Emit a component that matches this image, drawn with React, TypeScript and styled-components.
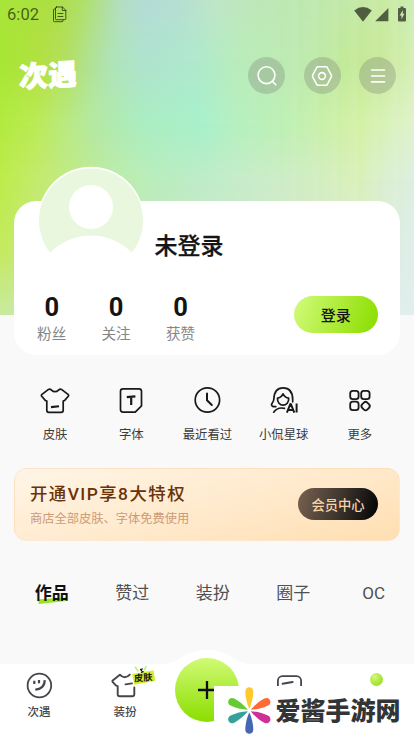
import React from "react";
import styled, { createGlobalStyle, css } from "styled-components";

const GlobalStyle = createGlobalStyle`
  * { box-sizing: border-box; }
  body { margin: 0; background: #f9f9f9; }
  button { border: 0; padding: 0; margin: 0; font: inherit; }
  svg { display: block; flex: none; }
`;

const Screen = styled.div`
  position: relative;
  display: flex;
  flex-direction: column;
  width: 414px;
  height: 736px;
  overflow: hidden;
  background: #f9f9f9;
  color: #141414;
  font-family: Roboto, "Noto Sans CJK SC", sans-serif;
`;

const Backdrop = styled.div`
  position: absolute;
  inset: 0 0 auto 0;
  height: 315px;
  overflow: hidden;
`;

const Wash = styled.div`
  position: absolute;
  inset: 0;
`;

const Band = styled.div<{ $from: number; $to: number; $stops: string }>`
  position: absolute;
  inset: 0;
  background: linear-gradient(90deg, ${(p) => p.$stops});
  ${(p) =>
    p.$to > 0 &&
    css`
      mask-image: linear-gradient(180deg, transparent ${p.$from}px, #000 ${p.$to}px);
    `}
`;

const Streaks = styled.div`
  position: absolute;
  inset: 0 0 0 200px;
  background: repeating-linear-gradient(
    90deg,
    rgba(255, 255, 255, 0) 0,
    rgba(255, 255, 255, 0.07) 16px,
    rgba(255, 255, 255, 0) 20px
  );
  mask-image: linear-gradient(90deg, transparent, #000 60%);
`;

const bands = [
  { from: 0, to: 0, stops: "#a8e63a 0, #addf42 50px, #afe062 80px, #b2df98 103px, #b4dfc0 120px, #b3dcd5 142px, #b6dfd3 180px, #bfe6c8 215px, #bde8b6 260px, #bfe8b0 310px, #c3e9a6 350px, #c8eba2 385px, #cbedb4 414px" },
  { from: 0, to: 60, stops: "#a7e633 0, #b2e042 40px, #b3df5e 65px, #b1e190 88px, #afe3b8 112px, #afe3cf 145px, #afe9cd 195px, #b9ecba 240px, #bdeab0 300px, #c1ea98 345px, #c6e996 375px, #d5efb2 414px" },
  { from: 60, to: 125, stops: "#b2eb40 0, #bbeb55 35px, #b9ea80 65px, #b4e9a4 95px, #acedc0 140px, #a7f0cb 200px, #b4f0c3 228px, #bdf0b5 280px, #cbf0a8 330px, #d4f1a5 360px, #d8f2b8 385px, #dff2cc 414px" },
  { from: 125, to: 180, stops: "#bdec4a 0, #c4ea6c 35px, #c2ea8c 75px, #bdecaa 115px, #b9edbc 155px, #bfecc8 200px, #c8ecc8 250px, #d0edc4 300px, #d9f0b8 358px, #daefd0 385px, #dcefe0 414px" },
  { from: 180, to: 250, stops: "#c4ea5e 0, #c8ea90 60px, #c6e8c0 140px, #d0e8d0 240px, #dcedd2 360px, #deeeea 414px" },
  { from: 250, to: 315, stops: "#c8e9a0 0, #cdeab0 80px, #d8ebdc 240px, #e1eeee 414px" },
];

const StatusBar = styled.header`
  position: relative;
  display: flex;
  align-items: center;
  height: 28px;
  padding: 0 7px;
  color: rgba(0, 0, 0, 0.6);
`;

const Clock = styled.span`
  width: 46px;
  padding-top: 1px;
  font-size: 16.5px;
  line-height: 28px;
  letter-spacing: 0.1px;
`;

const StatusIcons = styled.div`
  display: flex;
  align-items: center;
  margin-left: auto;
`;

const SignalIcon = styled.svg`
  margin-left: 3px;
`;

const BatteryIcon = styled.svg`
  margin: 0 1px 0 9px;
`;

const TopBar = styled.div`
  position: relative;
  display: flex;
  align-items: center;
  height: 95px;
  padding: 0 18px 0 19px;
`;

const Logo = styled.div`
  color: #fff;
  font-size: 29px;
  font-weight: 900;
  line-height: 32px;
  -webkit-text-stroke: 0.8px #fff;
  transform: skewY(-3deg);
`;

const Actions = styled.div`
  display: flex;
  gap: 18.3px;
  margin-left: auto;
`;

const RoundButton = styled.button`
  display: grid;
  place-items: center;
  width: 37px;
  height: 37px;
  border-radius: 50%;
  background: rgba(125, 135, 120, 0.34);
`;

const ProfileCard = styled.section`
  position: relative;
  height: 154px;
  margin: 78px 14px 0;
  border-radius: 22px;
  background: #fff;
`;

const AvatarBox = styled.div`
  position: absolute;
  left: 24px;
  top: -35.5px;
  width: 106px;
  height: 106px;
`;

const UserName = styled.h1`
  margin: 0;
  padding: 29px 0 0 140.5px;
  font-size: 23px;
  font-weight: 500;
  line-height: 34px;
  -webkit-text-stroke: 0.25px currentColor;
`;

const ProfileRow = styled.div`
  display: flex;
  align-items: flex-start;
  padding: 29.5px 22.5px 0 5.5px;
`;

const Stat = styled.div`
  display: flex;
  flex-direction: column;
  align-items: center;
  width: 64.4px;
`;

const StatValue = styled.span`
  font-size: 25.5px;
  font-weight: 700;
  line-height: 26px;
`;

const StatLabel = styled.span`
  font-size: 14.6px;
  line-height: 22px;
  margin-top: 3px;
  color: #858585;
`;

const LoginButton = styled.button`
  width: 83.5px;
  height: 37px;
  margin: 2.5px 0 0 auto;
  border-radius: 19px;
  background: linear-gradient(110deg, #d0fb78 3%, #b0ec3c 48%, #8ade00 97%);
  color: #141414;
  font-size: 15px;
  font-weight: 500;
`;

const Shortcuts = styled.nav`
  display: grid;
  grid-template-columns: repeat(5, 76.2px);
  height: 113px;
  padding: 27px 0 0 17px;
`;

const Shortcut = styled.a`
  display: flex;
  flex-direction: column;
  align-items: center;
  white-space: nowrap;
  color: #3c3c3c;
  font-size: 12.4px;
  line-height: 20px;
  svg { margin-bottom: 7px; }
`;

const VipBanner = styled.section`
  display: flex;
  align-items: center;
  justify-content: space-between;
  height: 73px;
  margin: 0 14px;
  padding: 0 21px 0 15px;
  border: 1px solid rgba(250, 216, 180, 0.35);
  border-radius: 13px;
  background: linear-gradient(165deg, #fff5e6 0%, #ffeacd 52%, #ffdfb2 100%);
`;

const VipTitle = styled.div`
  color: #6b3208;
  font-size: 17.4px;
  font-weight: 500;
  line-height: 26px;
  letter-spacing: 1.45px;
`;

const VipNote = styled.div`
  color: #cc9b78;
  font-size: 12.25px;
  line-height: 20px;
  margin-top: 2px;
`;

const VipButton = styled.button`
  width: 80px;
  height: 32px;
  margin-bottom: 1px;
  border-radius: 16px;
  background: linear-gradient(105deg, #76604f 2%, #40372f 50%, #090909 94%);
  color: #f8d3a7;
  font-size: 13.3px;
  font-weight: 500;
`;

const Tabs = styled.nav`
  display: grid;
  grid-template-columns: repeat(5, 80.5px);
  padding: 38px 0 0 11.5px;
`;

const Tab = styled.a<{ $active?: boolean }>`
  position: relative;
  isolation: isolate;
  text-align: center;
  font-size: 17px;
  line-height: 28px;
  color: ${(p) => (p.$active ? "#111" : "#505050")};
  font-weight: ${(p) => (p.$active ? 700 : 400)};
`;

const TabMark = styled.svg`
  position: absolute;
  z-index: -1;
  left: 26px;
  top: 17.5px;
`;

const BottomNav = styled.nav`
  position: relative;
  display: grid;
  grid-template-columns: 78px 94px 70px 94px 80px;
  height: 72px;
  margin-top: auto;
  background: #fff;
`;

const Bump = styled.svg`
  position: absolute;
  left: 162px;
  top: -14px;
`;

const NavItem = styled.a`
  position: relative;
  display: flex;
  flex-direction: column;
  align-items: center;
  padding-top: 7px;
  color: #45464b;
  font-size: 11.5px;
  font-weight: 500;
  line-height: 18px;
`;

const NavLabel = styled.span`
  margin-top: 3px;
`;

const SkinBadge = styled.span`
  position: absolute;
  left: 53px;
  top: 1px;
  width: 25px;
  height: 22px;
`;

const BadgeText = styled.span`
  position: absolute;
  left: 3px;
  top: 6px;
  color: #15190a;
  font-size: 9.3px;
  font-weight: 700;
  line-height: 14px;
  white-space: nowrap;
  transform: rotate(-5deg);
`;

const AddButton = styled.button`
  position: relative;
  display: grid;
  place-items: center;
  justify-self: center;
  width: 64px;
  height: 64px;
  margin-top: -6px;
  border-radius: 50%;
  background: linear-gradient(180deg, #d1fa75, #8ade00);
`;

const Orb = styled.span`
  width: 13px;
  height: 13px;
  margin-top: 1.5px;
  border-radius: 50%;
  background: radial-gradient(circle at 35% 30%, #d4f779, #a0e52d 65%, #90dc20);
`;

const SiteMark = styled.div`
  position: absolute;
  right: 0;
  bottom: 0;
  display: flex;
  align-items: center;
  width: 200px;
  height: 50px;
  padding-left: 14px;
  background: #fff;
`;

const SiteName = styled.span`
  margin-left: 4.5px;
  padding-top: 1px;
  color: #333436;
  font-size: 25px;
  font-weight: 900;
  line-height: 50px;
  white-space: nowrap;
`;

const stroke = { fill: "none", stroke: "currentColor", strokeLinecap: "round", strokeLinejoin: "round" } as const;

const ShirtIcon = () => (
  <svg width="30" height="36" viewBox="0 0 30 36" {...stroke} strokeWidth="1.7" color="#191919">
    <path d="M8.5 7.4 2 12.4q-1 .9-.3 1.9l3.6 4.1 1.5.7v9.2q0 2 2 2h12.4q2 0 2-2v-9.2l1.5-.7 3.6-4.1q.7-1-.3-1.9l-6.5-5q-1.5-.7-2.7.4-3.8 3.8-7.6 0-1.2-1.1-2.7-.4Z" />
    <path d="m11 25.1 8-.8" strokeWidth="2.1" strokeLinecap="butt" />
  </svg>
);

const FontIcon = () => (
  <svg width="30" height="36" viewBox="0 0 30 36" {...stroke} strokeWidth="1.7" color="#191919">
    <path d="M7 6.8h16q2.5 0 2.5 2.5v14.5l-6.3 6.3H7q-2.5 0-2.5-2.5V9.3q0-2.5 2.5-2.5Z" />
    <path d="m10.8 15.2 8.6-.8m-4.2.5v8" strokeWidth="2.2" strokeLinecap="butt" />
  </svg>
);

const ClockIcon = () => (
  <svg width="30" height="36" viewBox="0 0 30 36" {...stroke} strokeWidth="1.7" color="#191919">
    <circle cx="15.4" cy="18" r="12.2" />
    <path d="M15 11.5v6.8l4.8 4.7" strokeWidth="2" />
  </svg>
);

const GirlIcon = () => (
  <svg width="30" height="36" viewBox="0 0 30 36" {...stroke} strokeWidth="1.7" color="#191919">
    <g transform="translate(-.7 0)">
      <path d="M7.5 24.6c-2.3.4-4.2-.3-4.3-1.8 0-1.5 2.1-2.3 2.3-5.5.3-6.9 2.5-11.4 9.2-11.4 7.2 0 9.7 4.7 9.7 11.8v2.1" />
      <path d="M9.2 16.2c2.9-.4 4.4-2.2 5.5-4.4 1.2 2.3 2.8 4 5.7 4.4.2 3.9-2.3 7-5.6 7s-5.8-3-5.6-7ZM5.4 30.2c2.5-3.5 6.6-4.8 10.8-3.8" />
      <path d="m18.6 30.6 3.5-8.7h.4l3.5 8.7m-6-2.7h4.9M28.3 21.5v9.1" strokeWidth="2" strokeLinecap="butt" />
    </g>
  </svg>
);

const MoreIcon = () => (
  <svg width="30" height="36" viewBox="0 0 30 36" {...stroke} strokeWidth="1.8" color="#191919">
    <rect x="5.2" y="8.8" width="8.4" height="8.4" rx="2.6" />
    <rect x="16.2" y="8.8" width="8.4" height="8.4" rx="2.6" />
    <rect x="5.2" y="19.7" width="8.4" height="8.4" rx="2.6" />
    <rect x="16.9" y="20.4" width="7.4" height="7.4" rx="2.7" transform="rotate(45 20.6 24.1)" />
  </svg>
);

const shortcuts = [
  { label: "皮肤", Icon: ShirtIcon },
  { label: "字体", Icon: FontIcon },
  { label: "最近看过", Icon: ClockIcon },
  { label: "小侃星球", Icon: GirlIcon },
  { label: "更多", Icon: MoreIcon },
];

const petals = [
  { color: "#ffc92e", angle: 0 },
  { color: "#ff6a35", angle: 63 },
  { color: "#cf3096", angle: 117 },
  { color: "#4366b5", angle: 180 },
  { color: "#36a09b", angle: 243 },
  { color: "#65cb32", angle: 297 },
];

const tabs = ["作品", "赞过", "装扮", "圈子", "OC"];

export default function App() {
  return (
    <Screen>
      <GlobalStyle />
      <Backdrop>
        <Wash>
          {bands.map((b) => (
            <Band key={b.stops} $from={b.from} $to={b.to} $stops={b.stops} />
          ))}
        </Wash>
        <Streaks />
      </Backdrop>

      <StatusBar>
        <Clock>6:02</Clock>
        <svg width="14" height="17" viewBox="0 0 14 17" {...stroke} strokeWidth="1">
          <path d="M3.5 1h6l3.3 3.3v8.4q0 1-1 1H3.5q-1 0-1-1V2q0-1 1-1ZM9.3 1v3.5h3.5M2.4 3H1.5q-1 0-1 1v10.7q0 1 1 1H9q1 0 1-1v-.8M5 7.5h5M5 10.5h5" />
        </svg>
        <StatusIcons>
          <svg width="18" height="15" viewBox="0 0 18 15">
            <path fill="currentColor" d="M.2 3.4Q9-3.2 17.8 3.4L9 14.7Z" />
          </svg>
          <SignalIcon width="14" height="15" viewBox="0 0 14 15">
            <path fill="currentColor" d="M13.4 1v13.2H.2Z" />
          </SignalIcon>
          <BatteryIcon width="8" height="16" viewBox="0 0 8 16">
            <path
              fill="currentColor"
              fillRule="evenodd"
              d="M2.5.5h3V2H7q1 0 1 1v11.5q0 1-1 1H1q-1 0-1-1V3q0-1 1-1h1.5ZM4.8 4 1.7 9.4h1.8v3.8l2.9-5.4H4.8Z"
            />
          </BatteryIcon>
        </StatusIcons>
      </StatusBar>

      <TopBar>
        <Logo>次遇</Logo>
        <Actions>
          <RoundButton aria-label="搜索">
            <svg width="22" height="22" viewBox="0 0 22 22" {...stroke} strokeWidth="1.6" color="#fff">
              <circle cx="10.5" cy="10.2" r="8.4" />
              <path d="m16.4 16.4 3.4 3.4" />
            </svg>
          </RoundButton>
          <RoundButton aria-label="设置">
            <svg width="22" height="22" viewBox="0 0 22 22" {...stroke} strokeWidth="1.6" color="#fff">
              <path d="M6.9 1.8h8.2q.8 0 1.2.7l4 7.6q.4.9 0 1.8l-4 7.6q-.4.7-1.2.7H6.9q-.8 0-1.2-.7l-4-7.6q-.4-.9 0-1.8l4-7.6q.4-.7 1.2-.7Z" />
              <circle cx="11" cy="11" r="3.4" />
            </svg>
          </RoundButton>
          <RoundButton aria-label="菜单">
            <svg width="22" height="22" viewBox="0 0 22 22" {...stroke} strokeWidth="1.7" color="#fff">
              <path d="M4.6 5h12.8M4.6 11h12.8M4.6 16.8h12.8" />
            </svg>
          </RoundButton>
        </Actions>
      </TopBar>

      <ProfileCard>
        <AvatarBox>
          <svg width="106" height="106" viewBox="0 0 106 106">
            <defs>
              <clipPath id="face">
                <circle cx="53" cy="54.5" r="52" />
              </clipPath>
            </defs>
            <circle cx="53" cy="53.7" r="53" fill="#fff" />
            <g clipPath="url(#face)">
              <path d="M0 0h106v86.5H0Z" fill="#eaf7df" />
              <circle cx="53" cy="41" r="22" fill="#fff" />
              <circle cx="53" cy="127" r="57.5" fill="#fff" />
            </g>
          </svg>
        </AvatarBox>
        <UserName>未登录</UserName>
        <ProfileRow>
          {["粉丝", "关注", "获赞"].map((label) => (
            <Stat key={label}>
              <StatValue>0</StatValue>
              <StatLabel>{label}</StatLabel>
            </Stat>
          ))}
          <LoginButton>登录</LoginButton>
        </ProfileRow>
      </ProfileCard>

      <Shortcuts>
        {shortcuts.map(({ label, Icon }) => (
          <Shortcut key={label}>
            <Icon />
            {label}
          </Shortcut>
        ))}
      </Shortcuts>

      <VipBanner>
        <div>
          <VipTitle>开通VIP享8大特权</VipTitle>
          <VipNote>商店全部皮肤、字体免费使用</VipNote>
        </div>
        <VipButton>会员中心</VipButton>
      </VipBanner>

      <Tabs>
        {tabs.map((label, i) => (
          <Tab key={label} $active={i === 0}>
            {i === 0 && (
              <TabMark width="30" height="8" viewBox="0 0 30 8">
                <path d="M.3 2.2 29 .5 27.5 4 .8 7Z" fill="#98e51e" />
              </TabMark>
            )}
            {label}
          </Tab>
        ))}
      </Tabs>

      <BottomNav>
        <Bump width="90" height="15" viewBox="0 0 90 15">
          <path d="M0 15v-.8C17 14.2 22 0 45.5 0S73 14.2 90 14.2v.8Z" fill="#fff" />
        </Bump>
        <NavItem>
          <svg width="28" height="29" viewBox="0 0 28 29" {...stroke} strokeWidth="1.8">
            <circle cx="14.4" cy="14.5" r="11.8" />
            <path d="M9.3 9.8v3.2M14 9v3.2M19.6 9.2c.4 5.4-3.5 9.2-9.3 9.4" strokeWidth="2.2" strokeLinecap="butt" />
          </svg>
          <NavLabel>次遇</NavLabel>
        </NavItem>
        <NavItem>
          <svg width="28" height="29" viewBox="0 0 28 29" {...stroke} strokeWidth="1.9">
            <path d="M18.8 3.6c-3.2 3.6-7.1 3.5-9.9.1L2 9.3q-1 .9-.2 1.8l3.3 3.6 1.6.4v8.2q0 2 2 2h12.6q2 0 2-2v-6.8M14.5 13.4l6.5-1" />
          </svg>
          <NavLabel>装扮</NavLabel>
          <SkinBadge>
            <svg width="25" height="22" viewBox="0 0 25 22" fill="none">
              <path d="m4 1.7 3.3 5M15 1l-1.8 4.5" stroke="#bdf365" strokeWidth="1.5" />
              <path d="m1 9 21.5-3.8 1.8 10.6L3.5 19.8Z" fill="#d6ed31" />
              <path d="m9 4.5 2-.4-.8 1.6 1.8 1-1.8 1" stroke="#1a1a1a" strokeWidth="1.2" />
            </svg>
            <BadgeText>皮肤</BadgeText>
          </SkinBadge>
        </NavItem>
        <AddButton aria-label="发布">
          <svg width="20" height="20" viewBox="0 0 20 20" stroke="#101010" strokeWidth="2.3">
            <path d="M10 1v18M1 10h18" />
          </svg>
        </AddButton>
        <NavItem>
          <svg width="28" height="29" viewBox="0 0 28 29" {...stroke} strokeWidth="1.8">
            <rect x="2.9" y="5.2" width="23.2" height="20" rx="4.5" />
            <path d="m7.6 12.8 10-1.9" strokeWidth="2" />
          </svg>
        </NavItem>
        <NavItem>
          <Orb />
        </NavItem>
      </BottomNav>

      <SiteMark>
        <svg width="43" height="50" viewBox="0 0 43 50">
          {petals.map((p) => (
            <path
              key={p.color}
              d="M21.3 23C18.8 17.5 17.3 11 17.3 5.7c0-5.8 8-5.8 8 0 0 5.3-1.5 11.8-4 17.3Z"
              fill={p.color}
              transform={`rotate(${p.angle} 21.3 24.6)`}
            />
          ))}
        </svg>
        <SiteName>爱酱手游网</SiteName>
      </SiteMark>
    </Screen>
  );
}
